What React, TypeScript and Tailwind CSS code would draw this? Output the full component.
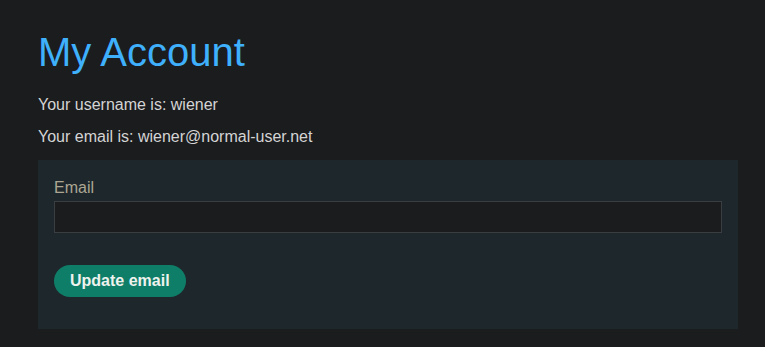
export default function App() {
  return (
    <div className="min-h-[347px] w-full bg-[#1b1c1e] font-['Liberation_Sans',Arial,sans-serif]">
      <div className="flex flex-col px-[38px] pt-[29px] pb-[18px]">
        <h1 className="text-[40px] leading-[46px] text-[#3fb0fb]">My Account</h1>
        <p className="mt-[21px] text-base leading-[18px] text-[#d4d4d4]">Your username is: wiener</p>
        <p className="mt-[14px] text-base leading-[18px] text-[#d4d4d4]">Your email is: wiener@normal-user.net</p>
        <form className="mt-[14px] flex w-[700px] flex-col bg-[#1e282c] px-4 pt-[19px] pb-8" onSubmit={(e) => e.preventDefault()}>
          <label htmlFor="email" className="text-base leading-[18px] text-[#aca693]">Email</label>
          <input
            id="email"
            name="email"
            type="email"
            className="mt-1 h-8 w-full border border-[#3a3e40] bg-[#1b1c1e] px-2 text-[#d4d4d4] outline-none"
          />
          <button
            type="submit"
            className="mt-8 h-8 w-fit rounded-full bg-[#0f7e68] px-4 text-base leading-[18px] font-bold text-[#eef2ee]"
          >
            Update email
          </button>
        </form>
      </div>
    </div>
  );
}
